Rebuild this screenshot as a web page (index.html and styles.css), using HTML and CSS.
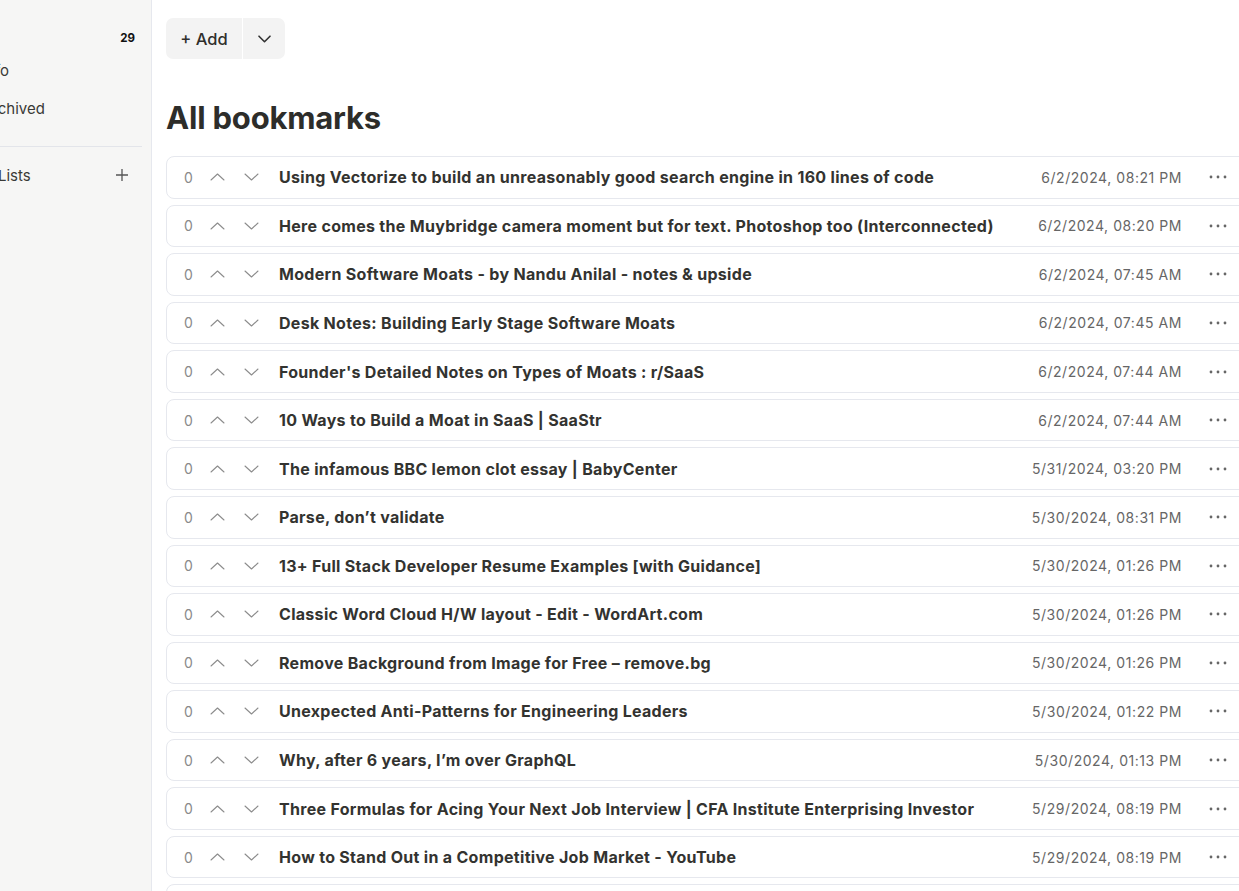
FILE: index.html
```html
<!DOCTYPE html>
<html lang="en">
<head>
<meta charset="utf-8">
<title>All bookmarks</title>
<link rel="stylesheet" href="styles.css">
</head>
<body>
<div class="layout">
  <aside class="sidebar">
    <nav class="nav">
      <a class="nav-item"><span class="nav-label">All</span><span class="nav-count">29</span></a>
      <a class="nav-item"><span class="nav-label">Info</span></a>
      <a class="nav-item"><span class="nav-label">Archived</span></a>
    </nav>
    <div class="sep"></div>
    <div class="lists-head">
      <span class="nav-label">Lists</span>
      <button class="icon-btn" aria-label="Add list">
        <svg width="14" height="14" viewBox="0 0 14 14"><path d="M7 1v12M1 7h12" stroke="#555" stroke-width="1.3" fill="none"/></svg>
      </button>
    </div>
  </aside>
  <main class="main">
    <div class="toolbar">
      <div class="btn-group">
        <button class="btn">+ Add</button>
        <button class="btn btn-caret" aria-label="More">
          <svg width="13" height="8" viewBox="0 0 13 8"><path d="M1 1.2l5.5 5.5 5.5-5.5" stroke="#333" stroke-width="1.6" fill="none" stroke-linecap="round" stroke-linejoin="round"/></svg>
        </button>
      </div>
    </div>
    <h1 class="title">All bookmarks</h1>
    <ul class="rows" id="rows"></ul>
  </main>
</div>
<script src="app.js"></script>
</body>
</html>
```
FILE: app.js
```js
const items = [
  ["Using Vectorize to build an unreasonably good search engine in 160 lines of code", "6/2/2024, 08:21 PM"],
  ["Here comes the Muybridge camera moment but for text. Photoshop too (Interconnected)", "6/2/2024, 08:20 PM"],
  ["Modern Software Moats - by Nandu Anilal - notes & upside", "6/2/2024, 07:45 AM"],
  ["Desk Notes: Building Early Stage Software Moats", "6/2/2024, 07:45 AM"],
  ["Founder's Detailed Notes on Types of Moats : r/SaaS", "6/2/2024, 07:44 AM"],
  ["10 Ways to Build a Moat in SaaS | SaaStr", "6/2/2024, 07:44 AM"],
  ["The infamous BBC lemon clot essay | BabyCenter", "5/31/2024, 03:20 PM"],
  ["Parse, don\u2019t validate", "5/30/2024, 08:31 PM"],
  ["13+ Full Stack Developer Resume Examples [with Guidance]", "5/30/2024, 01:26 PM"],
  ["Classic Word Cloud H/W layout - Edit - WordArt.com", "5/30/2024, 01:26 PM"],
  ["Remove Background from Image for Free \u2013 remove.bg", "5/30/2024, 01:26 PM"],
  ["Unexpected Anti-Patterns for Engineering Leaders", "5/30/2024, 01:22 PM"],
  ["Why, after 6 years, I\u2019m over GraphQL", "5/30/2024, 01:13 PM"],
  ["Three Formulas for Acing Your Next Job Interview | CFA Institute Enterprising Investor", "5/29/2024, 08:19 PM"],
  ["How to Stand Out in a Competitive Job Market - YouTube", "5/29/2024, 08:19 PM"],
  ["Designing Data-Intensive Applications", "5/29/2024, 08:10 PM"]
];
const up = '<svg width="15" height="8" viewBox="0 0 15 8"><path d="M1 7l6.5-6 6.5 6" stroke="#8c8c8c" stroke-width="1.1" fill="none" stroke-linecap="round" stroke-linejoin="round"/></svg>';
const down = '<svg width="15" height="8" viewBox="0 0 15 8"><path d="M1 1l6.5 6 6.5-6" stroke="#8c8c8c" stroke-width="1.1" fill="none" stroke-linecap="round" stroke-linejoin="round"/></svg>';
const dots = '<svg width="18" height="4" viewBox="0 0 18 4"><circle cx="2" cy="2" r="1.4" fill="#666"/><circle cx="9" cy="2" r="1.4" fill="#666"/><circle cx="16" cy="2" r="1.4" fill="#666"/></svg>';
const list = document.getElementById("rows");
list.innerHTML = items.map(([t, d]) =>
  `<li class="row"><span class="count">0</span><button class="vote">${up}</button><button class="vote">${down}</button><a class="row-title">${t}</a><span class="date">${d}</span><button class="more">${dots}</button></li>`
).join("");
```
FILE: styles.css
```css
* { box-sizing: border-box; }
html, body { margin: 0; padding: 0; overflow: hidden; height: 100%; }
body {
  font-family: Inter, "Noto Sans", "Liberation Sans", sans-serif;
  color: #2f2f2c;
  background: #fff;
}
button { font-family: inherit; border: 0; background: none; padding: 0; cursor: pointer; }
.layout { display: flex; margin-left: -98px; height: 100%; }
.sidebar {
  flex: 0 0 250px;
  background: #f6f6f5;
  border-right: 1px solid #e6e8ee;
  padding: 24px 9px 0 80px;
}
.nav { display: flex; flex-direction: column; }
.nav-item {
  display: flex; align-items: center; justify-content: space-between;
  height: 38px; font-size: 15px; color: #3a3a37;
}
.nav-item:first-child { height: 27px; }
.nav-label { font-size: 15px; color: #3a3a37; }
.nav-count { font-size: 11.5px; font-weight: 700; color: #111; margin-right: 7px; }
.sep { height: 1px; background: #e3e5ea; margin: 19px 0 0; }
.lists-head {
  display: flex; align-items: center; justify-content: space-between;
  height: 56px; padding-right: 13px; padding-left: 16px;
}
.icon-btn { display: flex; }
.main { flex: 0 0 auto; width: 1120px; padding: 18px 0 0 14px; }
.toolbar { display: flex; }
.btn-group { display: flex; background: #f3f3f3; border-radius: 7px; overflow: hidden; height: 41px; }
.btn {
  display: flex; align-items: center; justify-content: center;
  font-size: 16.5px; font-weight: 500; color: #2f2f2c; padding: 0 12px;
}
.btn:first-child { width: 77px; border-right: 1px solid #fff; }
.btn-caret { width: 42px; }
.title { font-size: 31px; font-weight: 700; margin: 41px 0 20px; line-height: 36px; color: #2d2d2a; letter-spacing: -0.2px; }
.rows { list-style: none; margin: 0; padding: 0; display: flex; flex-direction: column; gap: 6px; width: 1085px; }
.row {
  display: flex; align-items: center; height: 42.57px; flex: 0 0 auto;
  border: 1px solid #e6e8ee; border-radius: 8px; padding: 0 16px 0 17px;
}
.count { font-size: 14px; color: #8a8a8a; width: 8px; }
.vote { width: 28px; height: 28px; display: flex; align-items: center; justify-content: center; margin-left: 11px; }
.vote + .vote { margin-left: 6px; }
.row-title { font-size: 16px; letter-spacing: 0.3px; font-weight: 700; color: #333330; margin-left: 14px; flex: 1; white-space: nowrap; overflow: hidden; }
.date { font-size: 14px; letter-spacing: 0.55px; color: #666; white-space: nowrap; }
.more { width: 32px; height: 28px; display: flex; align-items: center; justify-content: center; margin-left: 20px; }
```
